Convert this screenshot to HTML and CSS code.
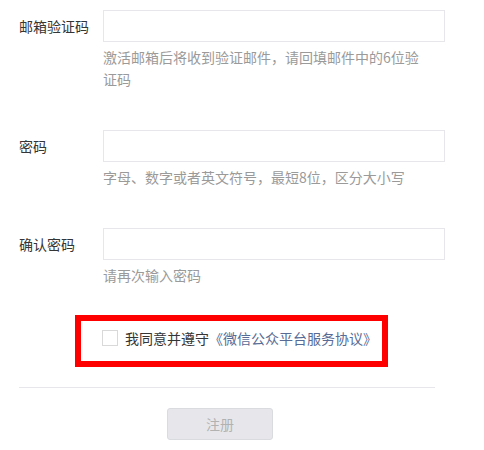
FILE: index.html
```html
<!DOCTYPE html>
<html lang="zh-CN">
<head>
<meta charset="utf-8">
<title>注册</title>
<link rel="stylesheet" href="styles.css">
</head>
<body>
<form class="form">
  <div class="row">
    <label class="label">邮箱验证码</label>
    <div class="field">
      <input class="input" type="text">
      <p class="hint">激活邮箱后将收到验证邮件，请回填邮件中的6位验证码</p>
    </div>
  </div>
  <div class="row">
    <label class="label">密码</label>
    <div class="field">
      <input class="input" type="password">
      <p class="hint">字母、数字或者英文符号，最短8位，区分大小写</p>
    </div>
  </div>
  <div class="row">
    <label class="label">确认密码</label>
    <div class="field">
      <input class="input" type="password">
      <p class="hint">请再次输入密码</p>
    </div>
  </div>
  <div class="agree">
    <span class="checkbox"></span>
    <span class="agree-text">我同意并遵守<a class="link" href="#">《微信公众平台服务协议》</a></span>
  </div>
  <div class="divider"></div>
  <div class="actions">
    <button class="btn" type="button" disabled>注册</button>
  </div>
</form>
</body>
</html>
```

FILE: styles.css
```css
html, body {
  margin: 0;
  padding: 0;
  background: #fff;
}
body {
  font-family: "Noto Sans CJK SC", "Liberation Sans", sans-serif;
  font-size: 14px;
  color: #353535;
}
.form {
  padding: 10px 0 0 19px;
}
.row {
  display: flex;
  align-items: flex-start;
  margin-bottom: 40px;
}
.row:nth-child(3) {
  margin-bottom: 29px;
}
.label {
  width: 84px;
  line-height: 32px;
  font-size: 14px;
  color: #353535;
}
.field {
  width: 342px;
}
.input {
  display: block;
  box-sizing: border-box;
  width: 342px;
  height: 32px;
  margin: 0;
  border: 1px solid #e7e7eb;
  border-radius: 0;
  outline: none;
  padding: 0 10px;
  font: inherit;
}
.hint {
  margin: 4px 0 0;
  max-width: 322px;
  line-height: 22px;
  font-size: 14px;
  color: #9a9a9a;
}
.agree {
  display: flex;
  align-items: center;
  box-sizing: border-box;
  width: 313px;
  height: 52px;
  margin-left: 56px;
  border: 6px solid #ff0000;
  padding: 0 0 6px 21px;
}
.checkbox {
  box-sizing: border-box;
  width: 16px;
  height: 16px;
  border: 1px solid #d9d9d9;
  background: #fff;
  flex: none;
}
.agree-text {
  margin-left: 7px;
  line-height: 20px;
  color: #353535;
}
.link {
  color: #576b95;
  text-decoration: none;
}
.divider {
  width: 416px;
  height: 1px;
  margin-top: 20px;
  background: #e7e7eb;
}
.actions {
  padding: 20px 0 0 148px;
}
.btn {
  box-sizing: border-box;
  width: 106px;
  height: 32px;
  border: 1px solid #dadbde;
  border-radius: 3px;
  background: #e7e7eb;
  color: #b2b2b2;
  font: inherit;
  font-size: 14px;
  padding: 0;
}
```
